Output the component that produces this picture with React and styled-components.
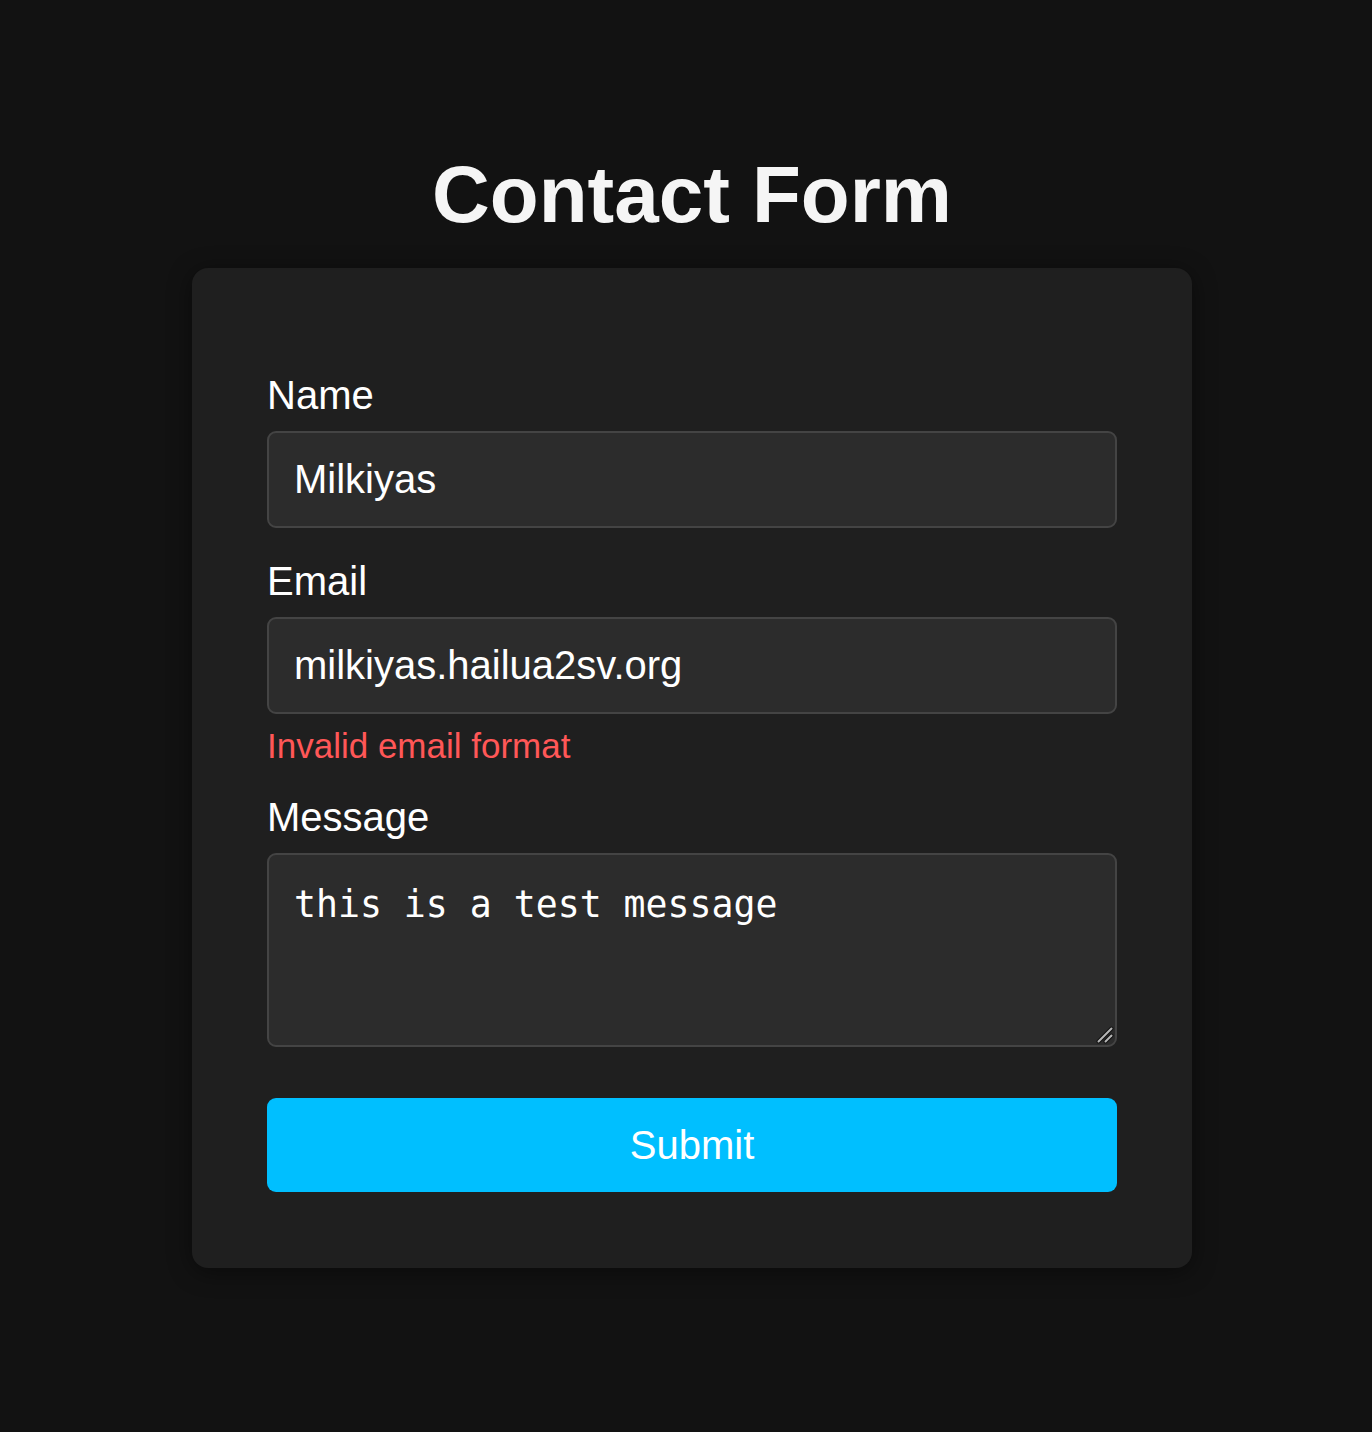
import React, { useState } from "react";
import styled, { createGlobalStyle } from "styled-components";

const GlobalStyle = createGlobalStyle`
  html, body {
    margin: 0;
    padding: 0;
    background: #121212;
  }
  body {
    font-family: "Liberation Sans", Arial, sans-serif;
    color: #f5f5f5;
    min-height: 1432px;
  }
`;

const Page = styled.main`
  display: flex;
  flex-direction: column;
  align-items: center;
  padding: 149px 0 0 12px;
  box-sizing: border-box;
  min-height: 1432px;
`;

const Title = styled.h1`
  margin: 0 0 27px;
  font-family: "Liberation Sans", Arial, sans-serif;
  font-size: 80px;
  line-height: 92px;
  font-weight: 700;
  color: #f5f5f5;
`;

const Card = styled.section`
  width: 1000px;
  box-sizing: border-box;
  padding: 104px 75px 76px;
  background: #1f1f1f;
  border-radius: 16px;
  box-shadow: 0 4px 24px rgba(0, 0, 0, 0.45);
`;

const Form = styled.form`
  display: flex;
  flex-direction: column;
  gap: 30px;
`;

const Field = styled.div`
  display: flex;
  flex-direction: column;
  gap: 13px;
`;

const Label = styled.label`
  font-size: 40px;
  line-height: 46px;
  color: #ffffff;
`;

const controlBase = `
  width: 100%;
  box-sizing: border-box;
  background: #2c2c2c;
  border: 2px solid #444444;
  border-radius: 9px;
  color: #ffffff;
  outline: none;
  margin: 0;
`;

const Input = styled.input`
  ${controlBase}
  height: 97px;
  padding: 0 25px;
  font-family: "Liberation Sans", Arial, sans-serif;
  font-size: 40px;
  line-height: 46px;
`;

const TextAreaWrap = styled.div`
  position: relative;
`;

const TextArea = styled.textarea`
  ${controlBase}
  display: block;
  height: 194px;
  padding: 28px 25px;
  font-family: "DejaVu Sans Mono", "Liberation Mono", monospace;
  font-size: 36.5px;
  line-height: normal;
  resize: none;
`;

const ResizeGrip = styled.svg`
  position: absolute;
  right: 3px;
  bottom: 3px;
  width: 18px;
  height: 18px;
  pointer-events: none;
`;

const ErrorText = styled.div`
  margin: -1px 0 -2px;
  font-size: 35px;
  line-height: 40px;
  color: #ff5757;
`;

const SubmitButton = styled.button`
  margin-top: 21px;
  width: 100%;
  height: 94px;
  border: none;
  border-radius: 9px;
  background: #00bfff;
  color: #ffffff;
  font-family: "Liberation Sans", Arial, sans-serif;
  font-size: 40px;
  line-height: 46px;
  cursor: pointer;
`;

export default function App() {
  const [name, setName] = useState("Milkiyas");
  const [email, setEmail] = useState("milkiyas.hailua2sv.org");
  const [message, setMessage] = useState("this is a test message");

  return (
    <>
      <GlobalStyle />
      <Page>
        <Title>Contact Form</Title>
        <Card>
          <Form onSubmit={(e) => e.preventDefault()} noValidate>
            <Field>
              <Label htmlFor="name">Name</Label>
              <Input id="name" value={name} onChange={(e) => setName(e.target.value)} />
            </Field>
            <Field>
              <Label htmlFor="email">Email</Label>
              <Input id="email" value={email} onChange={(e) => setEmail(e.target.value)} />
              <ErrorText>Invalid email format</ErrorText>
            </Field>
            <Field>
              <Label htmlFor="message">Message</Label>
              <TextAreaWrap>
                <TextArea id="message" value={message} onChange={(e) => setMessage(e.target.value)} />
                <ResizeGrip viewBox="0 0 18 18" aria-hidden="true">
                  <g strokeLinecap="round">
                    <line x1="2.5" y1="15.5" x2="15.5" y2="2.5" stroke="#111" strokeWidth="4" />
                    <line x1="9.5" y1="15.5" x2="15.5" y2="9.5" stroke="#111" strokeWidth="4" />
                    <line x1="2.5" y1="15.5" x2="15.5" y2="2.5" stroke="#b5b5b5" strokeWidth="2" />
                    <line x1="9.5" y1="15.5" x2="15.5" y2="9.5" stroke="#b5b5b5" strokeWidth="2" />
                  </g>
                </ResizeGrip>
              </TextAreaWrap>
            </Field>
            <SubmitButton type="submit">Submit</SubmitButton>
          </Form>
        </Card>
      </Page>
    </>
  );
}
